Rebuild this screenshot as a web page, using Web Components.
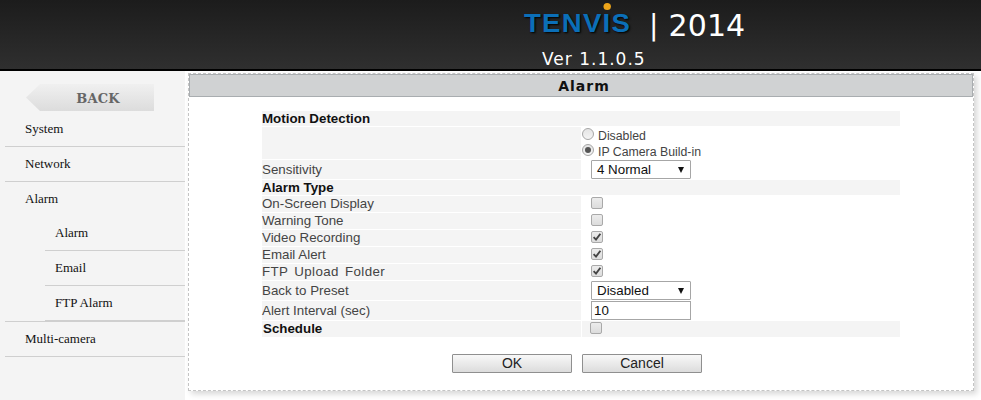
<!DOCTYPE html>
<html>
<head>
<meta charset="utf-8">
<title>Alarm</title>
<style>
  html, body { margin: 0; height: 100%; overflow: hidden; background: #fff; }
</style>
</head>
<body>
<app-shell>
  <top-bar slot="top"></top-bar>
  <side-menu slot="side">
    <menu-item first>System</menu-item>
    <menu-item>Network</menu-item>
    <menu-item nb>Alarm</menu-item>
    <menu-item sub>Alarm</menu-item>
    <menu-item sub>Email</menu-item>
    <menu-item sub thick>FTP Alarm</menu-item>
    <menu-item last>Multi-camera</menu-item>
  </side-menu>
  <alarm-panel slot="main" heading="Alarm">
    <form-head>Motion Detection</form-head>
    <form-row tall>
      <div style="display:flex;flex-direction:column">
        <radio-opt>Disabled</radio-opt>
        <radio-opt checked>IP Camera Build-in</radio-opt>
      </div>
    </form-row>
    <form-row label="Sensitivity" h="19"><fake-select>4 Normal</fake-select></form-row>
    <form-head>Alarm Type</form-head>
    <form-row label="On-Screen Display"><check-box></check-box></form-row>
    <form-row label="Warning Tone"><check-box></check-box></form-row>
    <form-row label="Video Recording"><check-box checked></check-box></form-row>
    <form-row label="Email Alert"><check-box checked></check-box></form-row>
    <form-row label="FTP Upload Folder" style="word-spacing:2px;letter-spacing:.4px"><check-box checked></check-box></form-row>
    <form-row label="Back to Preset" h="19"><fake-select>Disabled</fake-select></form-row>
    <form-row label="Alert Interval (sec)" h="19"><text-box>10</text-box></form-row>
    <form-row label="Schedule" bold><check-box style="margin-left:8px"></check-box></form-row>
    <form-buttons slot="actions">
      <push-button>OK</push-button>
      <push-button>Cancel</push-button>
    </form-buttons>
  </alarm-panel>
</app-shell>

<script>
function shadow(el, html) {
  el.attachShadow({ mode: 'open' }).innerHTML = html;
}

class AppShell extends HTMLElement {
  constructor() {
    super();
    shadow(this, `
    <style>
      :host { display: flex; flex-direction: column; height: 100vh; }
      .body { flex: 1; display: flex; min-height: 0; }
    </style>
    <slot name="top"></slot>
    <div class="body">
      <slot name="side"></slot>
      <slot name="main"></slot>
    </div>`);
  }
}

class TopBar extends HTMLElement {
  constructor() {
    super();
    shadow(this, `
    <style>
      :host {
        display: block;
        box-sizing: border-box;
        height: 71px;
        padding: 4px 0 0 524px;
        background: linear-gradient(#1c1c1c, #2f2f2f);
        border-bottom: 2px solid #000;
        color: #fff;
        font-family: "DejaVu Sans", sans-serif;
      }
      .brand { display: flex; align-items: center; height: 42px; }
      .logo {
        position: relative;
        font: bold 26px "Liberation Sans", sans-serif;
        letter-spacing: 1.2px;
        transform: scaleX(1.06);
        transform-origin: left;
        color: #0b6fb8;
        text-shadow: 1px 1px 2px #000;
        margin-top: -3px;
      }
      .dot {
        position: absolute;
        left: 75px;
        top: -5px;
        width: 7px;
        height: 7px;
        border-radius: 50%;
        background: #eda51a;
      }
      .sep { margin-left: 24px; font-size: 28px; font-weight: 400; }
      .year { margin-left: 10px; font-size: 30px; letter-spacing: .1px; }
      .ver { margin: 4px 0 0 18px; font-size: 17px; letter-spacing: 1px; line-height: 19px; }
    </style>
    <div class="brand">
      <span class="logo">TENVIS<span class="dot"></span></span>
      <span class="sep">|</span>
      <span class="year">2014</span>
    </div>
    <div class="ver">Ver 1.1.0.5</div>`);
  }
}

class SideMenu extends HTMLElement {
  constructor() {
    super();
    shadow(this, `
    <style>
      :host {
        display: block;
        width: 185px;
        flex: none;
        background: #f4f4f4;
        padding-top: 13px;
        box-sizing: border-box;
      }
      .back {
        display: flex;
        align-items: center;
        justify-content: center;
        box-sizing: border-box;
        width: 128px;
        height: 27px;
        margin-left: 26px;
        padding: 2px 0 0 16px;
        clip-path: polygon(14px 0, 100% 0, 100% 100%, 14px 100%, 0 50%);
        background: linear-gradient(#f0f0f0, #dcdcdc);
        color: #666;
        font: bold 13px "DejaVu Serif", serif;
        letter-spacing: .2px;
      }
    </style>
    <div class="back">BACK</div>
    <slot></slot>`);
  }
}

class MenuItem extends HTMLElement {
  constructor() {
    super();
    shadow(this, `
    <style>
      :host {
        display: block;
        box-sizing: border-box;
        height: 35px;
        margin-left: 5px;
        padding: 9px 0 0 20px;
        border-bottom: 1px solid #cfcfcf;
        font: 13px/16px "Liberation Serif", serif;
        color: #111;
      }
      :host([first]) { height: 36px; padding-top: 10px; }
      :host([nb]) { height: 34px; border-bottom-color: transparent; }
      :host([sub]) { margin-left: 45px; padding-left: 10px; }
      :host([thick]) { height: 36px; border-bottom-width: 2px; }
      :host([last]) { height: 36px; margin-top: -1px; border-top: 1px solid #cfcfcf; }
    </style>
    <slot></slot>`);
  }
}

class AlarmPanel extends HTMLElement {
  static get observedAttributes() {
    return ['heading'];
  }

  constructor() {
    super();
    shadow(this, `
    <style>
      :host {
        display: block;
        box-sizing: border-box;
        width: 786px;
        height: 318px;
        margin: 2px 0 0 3px;
        border: 1px dashed #c4c4c4;
        background: #fff;
        box-shadow: 3px 3px 6px rgba(0,0,0,.16);
      }
      .title {
        box-sizing: border-box;
        height: 23px;
        padding: 1px 0 0 6px;
        background: #d0d2d3;
        border: 1px solid #a9adb0;
        text-align: center;
        color: #111;
        font: bold 14px/21px "DejaVu Sans", sans-serif;
        letter-spacing: 1px;
      }
      .form { margin: 14px 73px 0 73px; display: flex; flex-direction: column; gap: 1px; }
    </style>
    <div class="title"></div>
    <div class="form"><slot></slot></div>
    <slot name="actions"></slot>`);
  }

  attributeChangedCallback(attr, oldVal, newVal) {
    if (attr === 'heading') {
      this.shadowRoot.querySelector('.title').textContent = newVal;
    }
  }
}

class FormHead extends HTMLElement {
  constructor() {
    super();
    shadow(this, `
    <style>
      :host {
        display: block;
        height: 15px;
        background: #f4f4f4;
        color: #111;
        font: bold 13.33px/15px "Liberation Sans", sans-serif;
      }
    </style>
    <slot></slot>`);
  }
}

class FormRow extends HTMLElement {
  constructor() {
    super();
    const label = this.getAttribute('label') || '';
    const h = this.getAttribute('h') || 16;
    shadow(this, `
    <style>
      :host {
        display: grid;
        grid-template-columns: 319px 1fr;
        grid-template-rows: ${h}px;
        column-gap: 1px;
        height: ${h}px;
        font: 13.33px/15px "Liberation Sans", sans-serif;
        color: #444;
      }
      :host([tall]) { height: 32px; grid-template-rows: 32px; }
      :host([bold]) { color: #111; font-weight: bold; }
      .label {
        background: #f4f4f4;
        display: flex;
        align-items: ${h == 16 ? 'flex-start' : 'center'};
      }
      :host([bold]) .label { padding-left: 1px; }
      .value { display: flex; align-items: center; padding-left: 9px; }
      :host([tall]) .value { padding-left: 0; }
      :host([bold]) .value { background: #f4f4f4; padding-left: 0; }
    </style>
    <div class="label">${label}</div>
    <div class="value"><slot></slot></div>`);
  }
}

class RadioOpt extends HTMLElement {
  constructor() {
    super();
    shadow(this, `
    <style>
      :host {
        display: flex;
        align-items: center;
        box-sizing: border-box;
        height: 16px;
        font: 12.3px/16px "Liberation Sans", sans-serif;
        color: #444;
        padding-top: 1px;
      }
      i {
        box-sizing: border-box;
        display: flex;
        align-items: center;
        justify-content: center;
        width: 12px;
        height: 12px;
        margin: -3px 4px 0 0;
        border: 1px solid #a6a6a6;
        border-radius: 50%;
        background: linear-gradient(#e4e4e4, #f4f4f4);
      }
      b { display: none; width: 6px; height: 6px; border-radius: 50%; background: #555; }
      :host([checked]) b { display: block; }
    </style>
    <i><b></b></i><span><slot></slot></span>`);
  }
}

class CheckBox extends HTMLElement {
  constructor() {
    super();
    shadow(this, `
    <style>
      :host {
        display: flex;
        box-sizing: border-box;
        width: 12px;
        height: 12px;
        margin-top: -2px;
        border: 1px solid #a9a9a9;
        border-radius: 2px;
        background: linear-gradient(#ececec, #dcdcdc);
      }
      svg { display: none; width: 10px; height: 10px; }
      :host([checked]) svg { display: block; }
    </style>
    <svg viewBox="0 0 10 10"><path d="M1.6 5.2 L4 7.6 L8.4 1.8" fill="none" stroke="#444" stroke-width="1.9"/></svg>`);
  }
}

class FakeSelect extends HTMLElement {
  constructor() {
    super();
    shadow(this, `
    <style>
      :host {
        display: flex;
        align-items: center;
        justify-content: space-between;
        box-sizing: border-box;
        width: 100px;
        height: 19px;
        padding: 0 6px 0 5px;
        border: 1px solid #a6a6a6;
        border-radius: 1px;
        background: #fff;
        color: #111;
        font: 13.33px/17px "Liberation Sans", sans-serif;
      }
      i { width: 0; height: 0; border: 3.5px solid transparent; border-top: 6px solid #111; border-bottom: 0; }
    </style>
    <span><slot></slot></span><i></i>`);
  }
}

class TextBox extends HTMLElement {
  constructor() {
    super();
    shadow(this, `
    <style>
      :host {
        display: block;
        box-sizing: border-box;
        width: 100px;
        height: 19px;
        padding-left: 2px;
        border: 1px solid #a6a6a6;
        background: #fff;
        color: #111;
        font: 13.33px/17px "Liberation Sans", sans-serif;
      }
    </style>
    <slot></slot>`);
  }
}

class FormButtons extends HTMLElement {
  constructor() {
    super();
    shadow(this, `
    <style>
      :host { display: flex; gap: 10px; margin: 16px 0 0 263px; padding-top: 1px; }
    </style>
    <slot></slot>`);
  }
}

class PushButton extends HTMLElement {
  constructor() {
    super();
    shadow(this, `
    <style>
      :host {
        display: block;
        box-sizing: border-box;
        width: 120px;
        height: 19px;
        border: 1px solid #8f8f8f;
        border-radius: 1px;
        background: linear-gradient(#f8f8f8, #dcdcdc);
        text-align: center;
        color: #222;
        font: 14px/17px "Liberation Sans", sans-serif;
      }
    </style>
    <slot></slot>`);
  }
}

customElements.define('app-shell', AppShell);
customElements.define('top-bar', TopBar);
customElements.define('side-menu', SideMenu);
customElements.define('menu-item', MenuItem);
customElements.define('alarm-panel', AlarmPanel);
customElements.define('form-head', FormHead);
customElements.define('form-row', FormRow);
customElements.define('radio-opt', RadioOpt);
customElements.define('check-box', CheckBox);
customElements.define('fake-select', FakeSelect);
customElements.define('text-box', TextBox);
customElements.define('form-buttons', FormButtons);
customElements.define('push-button', PushButton);
</script>
</body>
</html>
